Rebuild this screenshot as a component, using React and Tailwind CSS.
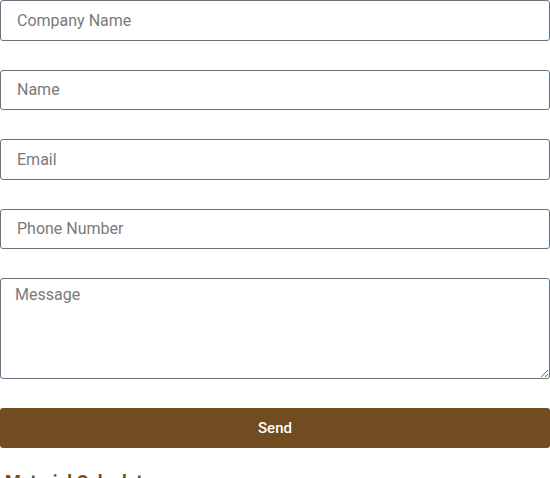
export default function App() {
  const fields = ['Company Name', 'Name', 'Email', 'Phone Number']

  return (
    <div className="w-[550px] bg-white font-['Roboto',sans-serif]">
      <form className="flex flex-col">
        {fields.map((f) => (
          <input
            key={f}
            type="text"
            placeholder={f}
            className="h-[40.5px] mb-[29px] w-full rounded-[3px] border border-[#69727d] px-4 text-[16px] text-[#1f2124] placeholder:text-[#7a7a7a] outline-none"
          />
        ))}
        <textarea
          placeholder="Message"
          className="h-[101px] w-full rounded-[3px] border border-[#69727d] px-[14px] py-[6px] text-[16px] leading-[20px] placeholder:text-[#7a7a7a] outline-none"
        />
        <button
          type="button"
          className="mt-[29px] h-[40px] w-full rounded-[3px] bg-[#704c20] text-[15px] font-medium text-white"
        >
          Send
        </button>
      </form>
      <h2 className="mt-[20px] pl-[5px] text-[18px] font-bold text-[#704c20]">Material Calculator</h2>
    </div>
  )
}
